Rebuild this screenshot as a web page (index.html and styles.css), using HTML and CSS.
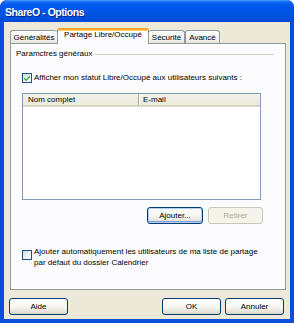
FILE: index.html
```html
<!DOCTYPE html>
<html lang="fr">
<head>
<meta charset="utf-8">
<title>ShareO - Options</title>
<link rel="stylesheet" href="styles.css">
</head>
<body>
<div class="window">
  <div class="titlebar"><span class="title">ShareO - Options</span></div>
  <div class="client">
    <div class="tabs">
      <div class="tab tab-gen">Généralités</div>
      <div class="tab tab-active">Partage Libre/Occupé</div>
      <div class="tab tab-sec">Sécurité</div>
      <div class="tab tab-adv">Avancé</div>
    </div>
    <div class="panel">
      <div class="group-head"><span class="group-label">Paramctres généraux</span><span class="rule"></span></div>
      <div class="content">
        <div class="check-row row-first">
          <span class="cb">
            <svg width="8" height="8" viewBox="0 0 8 8"><path d="M1 3.5 L3 5.5 L7 1.5 L7 3.2 L3 7 L1 5 Z" fill="#21a121"/></svg>
          </span>
          <span class="check-text">Afficher mon statut Libre/Occupé aux utilisateurs suivants :</span>
        </div>
        <div class="listview">
          <div class="lv-head">
            <div class="lv-col col-name">Nom complet</div>
            <div class="lv-col col-mail">E-mail</div>
          </div>
        </div>
        <div class="btn-row">
          <button class="btn btn-default btn-add">Ajouter...</button>
          <button class="btn btn-disabled btn-remove">Retirer</button>
        </div>
        <div class="check-row row-auto">
          <span class="cb cb-empty"></span>
          <span class="check-text two-line">Ajouter automatiquement les utilisateurs de ma liste de partage<br>par défaut du dossier Calendrier</span>
        </div>
      </div>
    </div>
    <div class="footer">
      <button class="btn btn-foot">Aide</button>
      <span class="spacer"></span>
      <button class="btn btn-foot">OK</button>
      <button class="btn btn-foot">Annuler</button>
    </div>
  </div>
</div>
</body>
</html>
```
FILE: styles.css
```css
html, body {
  margin: 0;
  padding: 0;
  background: #ffffff;
}
body {
  font-family: "Liberation Sans", Arial, sans-serif;
  font-size: 8px;
  color: #000000;
}
.window {
  width: 294px;
  height: 323px;
  display: flex;
  flex-direction: column;
  background: #0a4fdc;
  border-radius: 7px 7px 0 0;
  overflow: hidden;
}
.titlebar {
  height: 22px;
  flex: none;
  display: flex;
  align-items: center;
  padding-left: 5px;
  background: linear-gradient(#4a9cff 0px, #1268f5 2px, #0058ee 5px, #0054e6 12px, #0050de 18px, #0048d6 22px);
}
.title {
  font-family: "Liberation Sans", Arial, sans-serif;
  font-weight: bold;
  font-size: 10.5px;
  letter-spacing: -0.45px;
  color: #ffffff;
  text-shadow: 1px 1px 0 #0a1e88;
  margin-top: 1px;
}
.client {
  flex: 1;
  margin: 0 4px 4px 4px;
  background: #ece9d8;
  display: flex;
  flex-direction: column;
  padding: 6px 0 4px 0;
}
.tabs {
  height: 15px;
  flex: none;
  display: flex;
  align-items: flex-end;
  margin: 0 4px 0 6px;
}
.tab {
  height: 13px;
  box-sizing: border-box;
  border: 1px solid #919b9c;
  border-bottom: none;
  border-radius: 3px 3px 0 0;
  background: linear-gradient(#ffffff, #f3f3ef 60%, #e6e5dd);
  text-align: center;
  line-height: 11px;
  padding-top: 1px;
  white-space: nowrap;
}
.tab-gen { width: 47px; border-right: none; }
.tab-sec { width: 36px; border-left: none; }
.tab-adv { width: 35px; }
.tab-active {
  width: 92px;
  height: 16px;
  margin-bottom: -1px;
  position: relative;
  z-index: 1;
  background: #fcfcfe;
  border-top: 2px solid #f5a623;
  box-shadow: inset 0 1px 0 #ffd36a;
  line-height: 10px;
  padding-top: 0;
}
.panel {
  flex: 1;
  margin: 0 4px 0 6px;
  border: 1px solid #919b9c;
  background: #fcfcfe;
  display: flex;
  flex-direction: column;
}
.group-head {
  display: flex;
  align-items: center;
  padding: 5px 11px 0 5px;
  height: 10px;
  line-height: 10px;
}
.group-label {
  white-space: nowrap;
  padding-right: 3px;
}
.rule {
  flex: 1;
  height: 1px;
  background: #d0d0bf;
  margin-top: 1px;
}
.content {
  padding-left: 11px;
  width: 241px;
  display: flex;
  flex-direction: column;
}
.check-row {
  display: flex;
  align-items: flex-start;
  line-height: 10px;
}
.row-first {
  margin-top: 14px;
}
.cb {
  width: 10px;
  height: 10px;
  flex: none;
  box-sizing: border-box;
  border: 1px solid #1c5180;
  background: linear-gradient(135deg, #dcdcd4, #ffffff);
  display: flex;
  align-items: center;
  justify-content: center;
  margin-right: 2px;
}
.check-text {
  white-space: nowrap;
}
.listview {
  margin-top: 10px;
  width: 239px;
  height: 107px;
  box-sizing: border-box;
  border: 1px solid #7f9db9;
  background: #ffffff;
}
.lv-head {
  display: flex;
  height: 11px;
  line-height: 12px;
  background: linear-gradient(#f3f2ea, #ebeadb);
  border-bottom: 1px solid #d2cfbd;
  box-shadow: 0 1px 0 #e2decd;
}
.lv-col {
  box-sizing: border-box;
  padding-left: 5px;
  white-space: nowrap;
}
.col-name {
  width: 116px;
  border-right: 1px solid #aca899;
  box-shadow: 1px 0 0 #ffffff;
}
.col-mail {
  flex: 1;
  padding-left: 4px;
}
.btn-row {
  display: flex;
  justify-content: flex-end;
  gap: 5px;
  margin-top: 7px;
}
.btn {
  font-family: "Liberation Sans", Arial, sans-serif;
  font-size: 8px;
  height: 17px;
  box-sizing: border-box;
  border: 1px solid #003c74;
  border-radius: 3px;
  background: linear-gradient(#ffffff, #f4f4f0 55%, #e3e0d6 90%, #d6d0c5);
  color: #000000;
  padding: 0;
  margin: 0;
  line-height: 14px;
}
.btn-add { width: 56px; }
.btn-remove { width: 55px; }
.btn-default {
  box-shadow: inset 0 0 0 1px #b6cdf1, inset 0 -1px 0 1px #7a9ee0;
}
.btn-disabled {
  border-color: #c9c7ba;
  color: #aca899;
  background: #f5f4ea;
}
.row-auto {
  margin-top: 22px;
}
.row-auto .cb {
  margin-top: 4px;
}
.cb-empty {
  background: linear-gradient(135deg, #dcdcd4, #ffffff);
}
.two-line {
  line-height: 11px;
}
.footer {
  display: flex;
  margin: 8px 6px 0 5px;
  gap: 4px;
}
.spacer {
  flex: 1;
}
.btn-foot {
  width: 59px;
}
```
